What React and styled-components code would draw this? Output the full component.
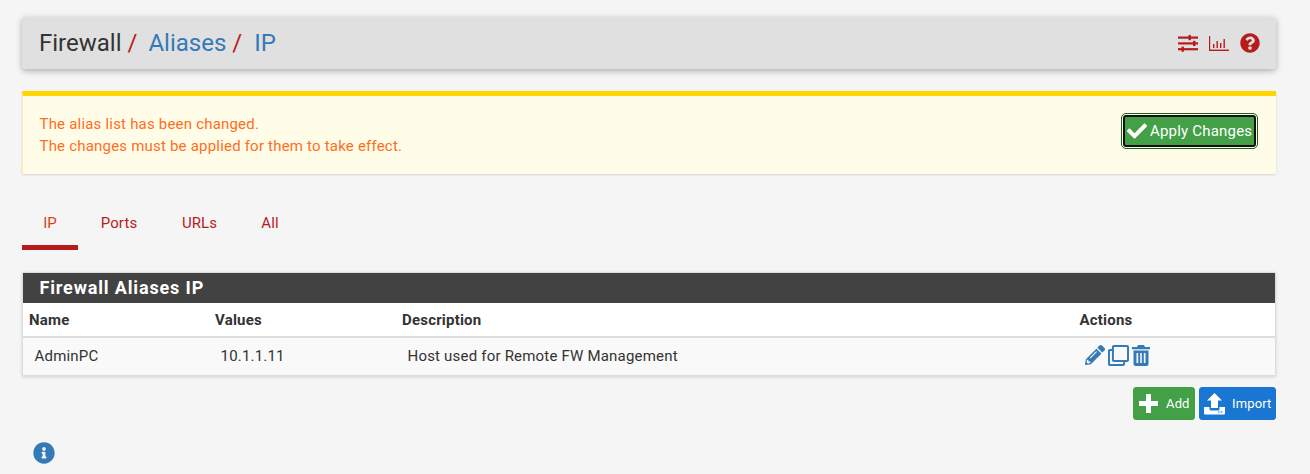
import React from "react";
import styled, { createGlobalStyle } from "styled-components";
import {
  FaCheck,
  FaQuestionCircle,
  FaPencilAlt,
  FaRegClone,
  FaInfoCircle,
} from "react-icons/fa";

const Global = createGlobalStyle`
  html, body { margin: 0; padding: 0; background: #f5f5f5; }
  body { font-family: Roboto, "Liberation Sans", sans-serif; color: #333; }
  * { box-sizing: border-box; }
`;

const Page = styled.div`
  width: 1310px;
  height: 474px;
  padding: 17px 34px 0 22px;
  overflow: hidden;
`;

const Header = styled.header`
  height: 52px;
  background: #e0e0e0;
  border-radius: 3px;
  box-shadow: 0 2px 6px rgba(0, 0, 0, 0.3);
  display: flex;
  align-items: center;
  justify-content: space-between;
  padding: 0 16px 0 17px;
`;

const Crumbs = styled.h1`
  margin: 0;
  font-size: 24px;
  font-weight: 400;
  display: flex;
  color: #333;
`;

const Crumb = styled.span`
  color: ${(p) => (p.$link ? "#337ab7" : "#333")};
`;

const Slash = styled.span`
  color: #b71c1c;
  margin: 0 ${(p) => p.$after}px 0 6px;
`;

const HeaderIcons = styled.div`
  display: flex;
  align-items: center;
  gap: 11px;
  color: #b71c1c;
`;

const Alert = styled.div`
  margin-top: 22px;
  height: 82.5px;
  background: #fffde7;
  border-top: 5px solid #ffd600;
  border-left: 1px solid #ffecb3;
  box-shadow: 0 1px 2px rgba(0, 0, 0, 0.12);
  display: flex;
  align-items: center;
  justify-content: space-between;
  padding: 0 20px 0 16.5px;
`;

const AlertText = styled.div`
  color: #ff6d22;
  font-size: 15px;
  letter-spacing: 0.2px;
  line-height: 22px;
`;

const ApplyButton = styled.button`
  height: 32px;
  width: 133px;
  margin-top: -7.5px;
  padding: 0 0 0 2px;
  border: 2px solid #111;
  outline: 1px solid #1b5e20;
  outline-offset: 1px;
  border-radius: 3px;
  background: #43a047;
  color: #fff;
  font: 400 15px Roboto, sans-serif;
  letter-spacing: 0.2px;
  display: flex;
  align-items: center;
  gap: 3px;
  white-space: nowrap;
`;

const Tabs = styled.nav`
  display: flex;
  margin-top: 27.5px;
`;

const Tab = styled.a`
  height: 49px;
  padding: 13px 0 0;
  width: ${(p) => p.$w}px;
  margin-left: ${(p) => p.$ml || 0}px;
  text-align: center;
  font-size: 15px;
  letter-spacing: 0.1px;
  color: ${(p) => (p.$active ? "#d84315" : "#b71c1c")};
  border-bottom: 5px solid ${(p) => (p.$active ? "#b71c1c" : "transparent")};
`;

const Panel = styled.section`
  margin-top: 22px;
  background: #fff;
  border: 1px solid #ddd;
  box-shadow: 0 1px 3px rgba(0, 0, 0, 0.15);
`;

const PanelTitle = styled.h2`
  margin: 0;
  height: 30px;
  background: #424242;
  color: #fff;
  font-size: 18px;
  font-weight: 700;
  letter-spacing: 0.85px;
  line-height: 29px;
  padding-left: 16.5px;
`;

const Row = styled.div`
  display: grid;
  grid-template-columns: 186px 187px 677.5px 1fr;
  align-items: center;
  letter-spacing: 0.2px;
`;

const HeadRow = styled(Row)`
  height: 35px;
  background: #fff;
  border-bottom: 2px solid #ddd;
  font-size: 15px;
  font-weight: 700;
  padding-left: 6px;
`;

const BodyRow = styled(Row)`
  height: 37px;
  background: #f9f9f9;
  font-size: 15px;
  padding-left: 11.5px;
  padding-bottom: 2px;
`;

const Actions = styled.div`
  display: flex;
  align-items: center;
  color: #337ab7;
  margin-top: -1px;
  margin-left: 0;
`;

const ClonedIcon = styled(FaRegClone)`
  margin: 0 3px;
`;

const Buttons = styled.div`
  display: flex;
  justify-content: flex-end;
  gap: 4px;
  margin-top: 11px;
`;

const ActionButton = styled.button`
  height: 33px;
  width: ${(p) => p.$w}px;
  border: 1px solid ${(p) => p.$bg};
  border-radius: 3px;
  background: ${(p) => p.$bg};
  color: #fff;
  font: 400 13px Roboto, sans-serif;
  letter-spacing: 0.15px;
  display: flex;
  align-items: center;
  padding: 0 0 0 ${(p) => p.$pad}px;
  gap: ${(p) => p.$gap}px;
`;

const InfoWrap = styled.div`
  margin: 22px 0 0 11px;
  color: #337ab7;
  line-height: 0;
`;

const ImportIcon = () => (
  <svg width="21" height="22" viewBox="0 0 21 22" fill="#fff">
    <path d="M10.5 0 L18 7.5 H14 V15 H7 V7.5 H3 Z" />
    <path d="M0 14 H5.5 V16 Q5.5 17.5 7 17.5 H14 Q15.5 17.5 15.5 16 V14 H21 V20.5 Q21 21.5 20 21.5 H1 Q0 21.5 0 20.5 Z" />
    <rect x="14" y="18.5" width="1.5" height="1" fill="#1976d2" />
    <rect x="16.5" y="18.5" width="2" height="1" fill="#1976d2" />
  </svg>
);

const PlusIcon = () => (
  <svg width="19" height="19" viewBox="0 0 19 19" fill="#fff">
    <path d="M7 0 H12 V7 H19 V12 H12 V19 H7 V12 H0 V7 H7 Z" />
  </svg>
);

const TrashIcon = () => (
  <svg width="18" height="21" viewBox="0 0 18 21" fill="#337ab7">
    <path d="M6 0 H12 L13 2 H18 V4.2 H0 V2 H5 Z" />
    <path fillRule="evenodd" d="M1.5 5.5 H16.5 V19 Q16.5 21 14.5 21 H3.5 Q1.5 21 1.5 19 Z M4.5 8 V18 H6.2 V8 Z M8.2 8 V18 H9.8 V8 Z M11.8 8 V18 H13.5 V8 Z" />
  </svg>
);

const StatsIcon = () => (
  <svg width="20" height="15" viewBox="0 0 20 15" fill="#b71c1c">
    <rect x="0" y="0" width="1.2" height="15" />
    <rect x="0" y="13.6" width="20" height="1.4" />
    <rect x="4" y="8" width="1.4" height="4" />
    <rect x="7.5" y="5" width="1.4" height="7" />
    <rect x="11" y="7" width="1.4" height="5" />
    <rect x="14.5" y="3" width="1.4" height="9" />
  </svg>
);

const SlidersIcon = () => (
  <svg width="20" height="17" viewBox="0 0 20 17" fill="#b71c1c">
    <rect x="0" y="1.5" width="20" height="2.2" />
    <rect x="10.5" y="0" width="2.4" height="5.2" />
    <rect x="0" y="7.3" width="20" height="2.2" />
    <rect x="15" y="5.8" width="2.4" height="5.2" />
    <rect x="0" y="13.1" width="20" height="2.2" />
    <rect x="3.5" y="11.6" width="2.4" height="5.2" />
  </svg>
);

export default function App() {
  return (
    <Page>
      <Global />
      <Header>
        <Crumbs>
          <Crumb>Firewall</Crumb>
          <Slash $after={11}>/</Slash>
          <Crumb $link>Aliases</Crumb>
          <Slash $after={12}>/</Slash>
          <Crumb $link>IP</Crumb>
        </Crumbs>
        <HeaderIcons>
          <SlidersIcon />
          <StatsIcon />
          <FaQuestionCircle size={20} />
        </HeaderIcons>
      </Header>

      <Alert>
        <AlertText>
          The alias list has been changed.
          <br />
          The changes must be applied for them to take effect.
        </AlertText>
        <ApplyButton>
          <FaCheck size={20} />
          Apply Changes
        </ApplyButton>
      </Alert>

      <Tabs>
        <Tab $w={56} $active>IP</Tab>
        <Tab $w={82}>Ports</Tab>
        <Tab $w={79}>URLs</Tab>
        <Tab $w={26} $ml={18}>All</Tab>
      </Tabs>

      <Panel>
        <PanelTitle>Firewall Aliases IP</PanelTitle>
        <HeadRow>
          <span>Name</span>
          <span>Values</span>
          <span>Description</span>
          <span>Actions</span>
        </HeadRow>
        <BodyRow>
          <span>AdminPC</span>
          <span>10.1.1.11</span>
          <span>Host used for Remote FW Management</span>
          <Actions>
            <FaPencilAlt size={20} />
            <ClonedIcon size={21} />
            <TrashIcon />
          </Actions>
        </BodyRow>
      </Panel>

      <Buttons>
        <ActionButton $bg="#43a047" $w={62} $pad={5} $gap={8}>
          <PlusIcon />
          Add
        </ActionButton>
        <ActionButton $bg="#1976d2" $w={77} $pad={4} $gap={7}>
          <ImportIcon />
          Import
        </ActionButton>
      </Buttons>

      <InfoWrap>
        <FaInfoCircle size={22} />
      </InfoWrap>
    </Page>
  );
}
